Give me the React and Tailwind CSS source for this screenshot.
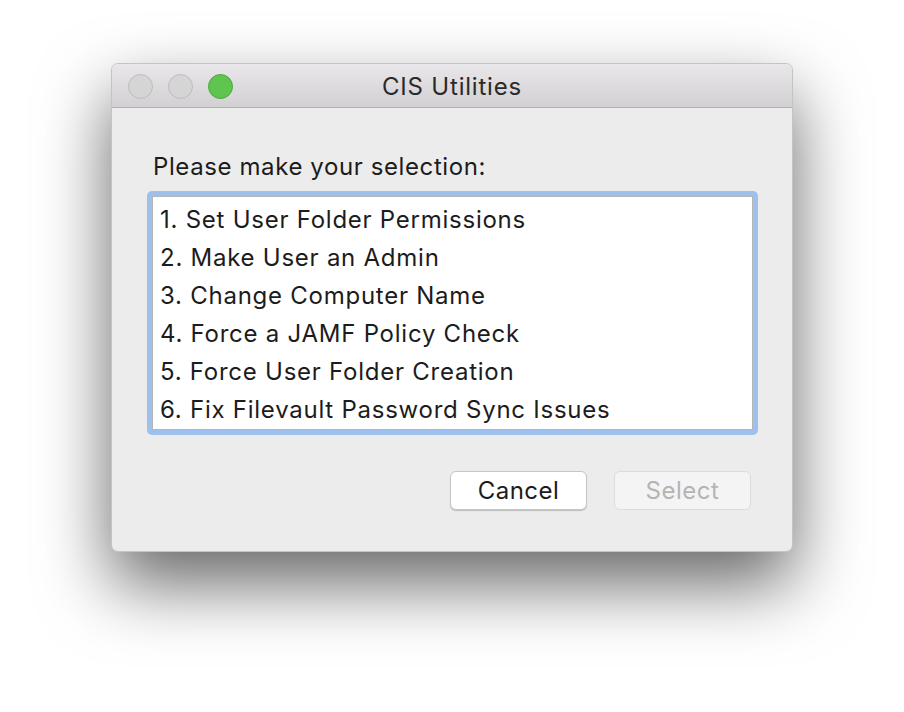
const items = [
  '1. Set User Folder Permissions',
  '2. Make User an Admin',
  '3. Change Computer Name',
  '4. Force a JAMF Policy Check',
  '5. Force User Folder Creation',
  '6. Fix Filevault Password Sync Issues',
];

const Light = ({ color }) => (
  <div className={`w-[25px] h-[25px] rounded-full border ${color}`} />
);

export default function App() {
  return (
    <div className="w-[904px] h-[712px] bg-white pt-[63px] pl-[111px] font-['Inter','Roboto',sans-serif] text-[#1c1c1c]">
      <div className="w-[682px] h-[489px] rounded-[7px] border border-[#c4c4c4] bg-[#ececec] shadow-[0_32px_70px_rgba(0,0,0,0.6)] flex flex-col overflow-hidden">
        {/* Title bar */}
        <div className="relative h-[44px] shrink-0 bg-gradient-to-b from-[#e9e7e9] to-[#d2d0d2] border-b border-[#b1b0b1] flex items-center">
          <div className="flex gap-[15px] pl-[16px] pt-[1px]">
            <Light color="bg-[#d6d5d6] border-[#bdbcbd]" />
            <Light color="bg-[#d6d5d6] border-[#bdbcbd]" />
            <Light color="bg-[#5fc54f] border-[#4aa83c]" />
          </div>
          <div className="absolute inset-0 pt-[3px] flex items-center justify-center text-[24px] tracking-[0.8px] text-[#2a2a2a] pointer-events-none">
            CIS Utilities
          </div>
        </div>

        {/* Body */}
        <div className="flex-1 flex flex-col pl-[35px] pr-[34px] pt-[43px]">
          <div className="pl-[6px] text-[24px] tracking-[0.6px] leading-[32px] mb-[8px]">Please make your selection:</div>

          <div className="rounded-[5px] bg-[#9dc0ef] p-[5px]">
            <div className="bg-white border border-[#b5b5b5] pl-[7px] pt-[4px] h-[234px]">
              {items.map((t) => (
                <div key={t} className="text-[24px] tracking-[0.75px] leading-[38px] whitespace-nowrap">{t}</div>
              ))}
            </div>
          </div>

          <div className="flex justify-end gap-[27px] mt-[36px] pr-[7px]">
            <button className="w-[137px] h-[39px] rounded-[6px] bg-white border border-[#c6c6c6] shadow-[0_1px_1px_rgba(0,0,0,0.2)] text-[24px] tracking-[0.5px] text-[#1c1c1c]">
              Cancel
            </button>
            <button className="w-[137px] h-[39px] rounded-[6px] bg-[#f4f4f4] border border-[#dcdcdc] text-[24px] tracking-[0.5px] text-[#b4b4b4]">
              Select
            </button>
          </div>
        </div>
      </div>
    </div>
  );
}
